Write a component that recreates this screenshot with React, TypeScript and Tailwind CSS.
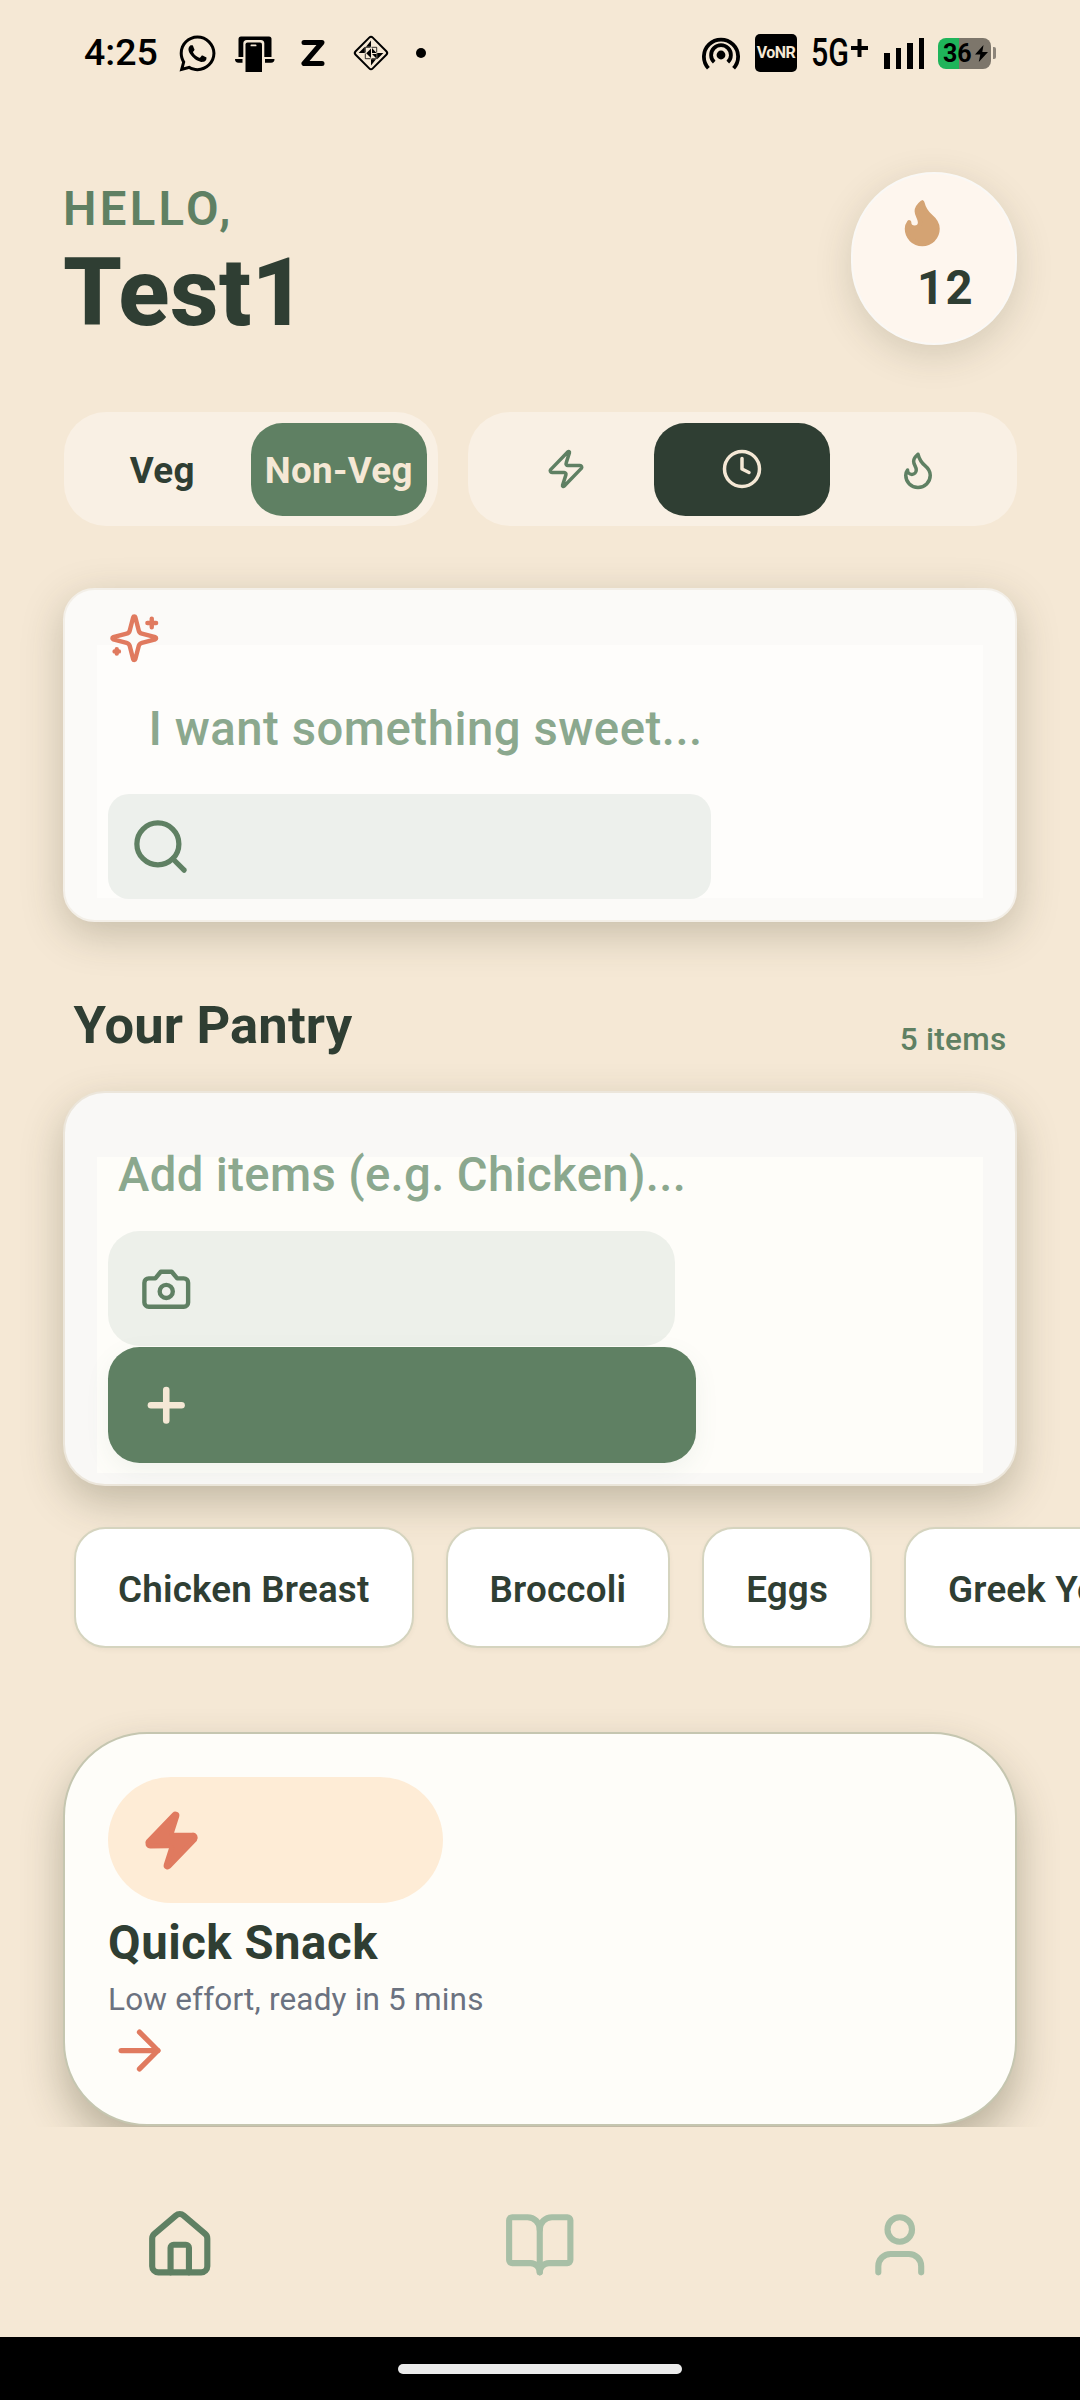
import type { ReactNode } from "react";
import { FaWhatsapp } from "react-icons/fa";
import { ArrowRight, BookOpen, Clock, Flame, House, Plus, Search, User, Zap } from "lucide-react";

const pantry = ["Chicken Breast", "Broccoli", "Eggs", "Greek Yogurt"];

function CastIcon() {
  return (
    <svg width="40" height="38" viewBox="0 0 40 38">
      <path d="M3.500 23V5q0-2.500 2.500-2.500h28q2.500 0 2.500 2.500v18z" />
      <path d="M0 25h7.500v3.800H3.500Q0 28.800 0 25zM30 25h9.500q0 3.800-3.500 3.800h-6z" />
      <path d="M8.300 38V9.500q0-3.500 3.500-3.500h14q3.500 0 3.500 3.500V38z" fill="#f5e8d5" />
      <path d="M12.500 8.500h12.500q2 0 2 2V38H10.500V10.500q0-2 2-2z" />
      <rect x="15.500" y="10.500" width="6" height="1.800" rx=".9" fill="#f5e8d5" />
    </svg>
  );
}

function DiamondIcon() {
  return (
    <svg width="38" height="38" viewBox="0 0 38 38">
      <rect x="6.900" y="6.900" width="24.200" height="24.200" rx="2.500" transform="rotate(45 19 19)" fill="none" stroke="#000" strokeWidth="2" />
      <path d="M19 6.500v6.300h-5zM12.800 12.800V19H6.600zM31.400 19h-6.200v6.200zM19 31.400v-6.200h5z" />
      <path d="M19 14.500V19h-4.500zM20 14l4.500 5H20zM19 19v5L14 19zM24.200 20v4.200L20 20z" />
      <path d="M13.300 18.500v-5.200h5.200M19.500 13.300h5.200v5.200M13.300 19.500v5.200h5.200M19.500 24.700h5.200v-5.200" fill="none" stroke="#000" strokeWidth=".8" />
    </svg>
  );
}

function HotspotIcon() {
  return (
    <svg width="38" height="36" viewBox="0 0 38 36" fill="none" stroke="#000" strokeWidth="3.800">
      <circle cx="19" cy="20" r="4.400" fill="#000" stroke="none" />
      <path d="M12.200 27.200a9.900 9.900 0 1 1 13.600 0" />
      <path d="M6.400 33.200a17.100 17.100 0 1 1 25.200 0" />
    </svg>
  );
}

function SparklesIcon() {
  return (
    <svg width="52.500" height="52.500" viewBox="0 0 24 24" fill="none" stroke="#e07a5f" strokeWidth="2" strokeLinecap="round" strokeLinejoin="round">
      <path d="M9.937 15.500A2 2 0 0 0 8.500 14.063l-6.135-1.582a.5.5 0 0 1 0-.962L8.500 9.936A2 2 0 0 0 9.937 8.500l1.582-6.135a.5.5 0 0 1 .963 0L14.063 8.500A2 2 0 0 0 15.500 9.937l6.135 1.581a.5.5 0 0 1 0 .964L15.500 14.063a2 2 0 0 0-1.437 1.437l-1.582 6.135a.5.5 0 0 1-.963 0z" />
      <path d="M20 3v4M22 5h-4M4 17v2M5 18H3" />
    </svg>
  );
}

function CameraIcon() {
  return (
    <svg width="52.500" height="52.500" viewBox="0 0 24 24" fill="none" stroke="#5f8063" strokeWidth="2" strokeLinecap="round" strokeLinejoin="round">
      <path d="M14.500 4h-5L7 7H4a2 2 0 0 0-2 2v9a2 2 0 0 0 2 2h16a2 2 0 0 0 2-2V9a2 2 0 0 0-2-2h-3l-2.500-3z" />
      <circle cx="12" cy="13" r="3" />
    </svg>
  );
}

function StatusBar() {
  return (
    <div className="flex h-[106px] items-center justify-between pl-[84px] pr-[84px] text-black">
      <div className="flex items-center">
        <span className="w-[95px] text-[37.500px] font-medium leading-none">4:25</span>
        <FaWhatsapp size={41} className="-ml-[2px]" />
        <div className="ml-[17px]"><CastIcon /></div>
        <svg className="ml-[26px]" width="24" height="28" viewBox="0 0 24 28" fill="none" stroke="#000" strokeWidth="5" strokeLinecap="round" strokeLinejoin="round">
          <path d="M3 3.500h18L3 24.500H21" />
        </svg>
        <div className="ml-[27px]"><DiamondIcon /></div>
        <div className="ml-[26px] size-[10px] rounded-full bg-black" />
      </div>
      <div className="flex items-center">
        <HotspotIcon />
        <div className="ml-[15px] flex h-[38px] w-[42px] items-center justify-center rounded-[5px] bg-black text-[16px] font-bold tracking-[-0.500px] text-[#f5e8d5]">VoNR</div>
        <div className="ml-[14px] flex w-[58px] items-center">
          <span className="w-[40px] origin-left scale-x-[0.8] text-[38px] font-medium leading-none">5G</span>
          <svg className="-mt-[10px]" width="17" height="18" viewBox="0 0 17 18">
            <path d="M8.500 0v18M0 9h17" stroke="#000" strokeWidth="4" />
          </svg>
        </div>
        <div className="ml-[15px] flex h-[31px] items-end gap-[6px]">
          <div className="h-[16px] w-[5.500px] bg-black" />
          <div className="h-[21px] w-[5.500px] bg-black" />
          <div className="h-[26px] w-[5.500px] bg-black" />
          <div className="h-[31px] w-[5.500px] bg-black" />
        </div>
        <div className="ml-[14px] flex h-[31px] w-[53px] items-center overflow-hidden rounded-[8px] bg-[linear-gradient(90deg,#1fb45a_21.500px,#7d766b_21.500px)] pl-[5px]">
          <span className="text-[25px] font-bold leading-none">36</span>
          <svg className="ml-[3px]" width="13" height="17" viewBox="0 0 13 17">
            <path d="M8.500 0 0 9.500h5.300L3.800 17 13 7H7.300z" />
          </svg>
        </div>
        <div className="ml-[2px] h-[12px] w-[3px] rounded-r-[2px] bg-[#8d857a]" />
      </div>
    </div>
  );
}

function Card({ className, children }: { className: string; children: ReactNode }) {
  return (
    <section className={"relative border-2 " + className}>
      {children}
    </section>
  );
}

export default function App() {
  return (
    <div className="h-[2400px] w-[1080px] overflow-hidden bg-[#f5e8d5] font-['Roboto',sans-serif] text-[#2f3e33]">
      <div className="h-[2127px] overflow-hidden">
        <StatusBar />

        <header className="mt-[66px] flex h-[173px] justify-between px-[63px]">
          <div className="pt-[7px]">
            <div className="text-[47.250px] font-semibold leading-[60px] tracking-[3.300px] text-[#5f8063]">HELLO,</div>
            <h1 className="mt-px text-[94.500px] font-extrabold leading-[106px] tracking-[0.400px]">Test1</h1>
          </div>
          <div className="h-[173px] w-[166px] rounded-[83px] border-2 border-[#faf8f5] bg-[#fef6ee] pl-[43px] pt-[22px] shadow-[0_10px_36px_rgba(60,60,35,0.17)]">
            <Flame size={52.5} color="#d4a373" fill="#d4a373" />
            <div className="mt-[9px] pl-[21px] text-[47.250px] font-bold leading-[60px] tracking-[1.300px]">12</div>
          </div>
        </header>

        <div className="mt-[67px] flex gap-[30.500px] px-[63.500px]">
          <div className="flex h-[114px] w-[374px] rounded-[42px] bg-[#f9f0e4] p-[10.500px] text-[36.750px] font-bold tracking-[0.300px]">
            <div className="flex flex-1 items-center justify-center pt-[4px]">Veg</div>
            <div className="flex flex-1 items-center justify-center rounded-[31.500px] bg-[#5f8063] pt-[4px] text-[#f5e8d5]">Non-Veg</div>
          </div>
          <div className="flex h-[114px] flex-1 rounded-[42px] bg-[#f9f0e4] p-[10.500px]">
            <div className="flex flex-1 items-center justify-center"><Zap size={42} color="#5f8063" /></div>
            <div className="flex flex-1 items-center justify-center rounded-[31.500px] bg-[#2f3e33]"><Clock size={42} color="#f5e8d5" /></div>
            <div className="flex flex-1 items-center justify-center pl-px pt-px"><Flame size={42} color="#5f8063" /></div>
          </div>
        </div>

        <Card className="mx-[63px] mt-[62px] h-[334px] rounded-[31.500px] border-[#f3efe8] bg-[#fbfaf8] shadow-[0_12px_40px_rgba(60,60,35,0.25)]">
          <div className="absolute bottom-[22px] left-[32px] right-[32px] top-[55px] bg-[#fefdfb]" />
          <div className="relative pl-[43px] pt-[22px]">
            <SparklesIcon />
            <div className="mt-[24.500px] h-[80px] pl-[40.500px] text-[47.250px] font-medium leading-[80px] tracking-[0.530px] text-[#8ba88e]">I want something sweet...</div>
            <div className="mt-[24.500px] flex h-[105px] w-[603px] items-center rounded-[21px] bg-[#edf0ec] pl-[21px]">
              <Search size={63} color="#5f8063" />
            </div>
          </div>
        </Card>

        <div className="mt-[68px] flex h-[101px] items-start justify-between px-[73.500px]">
          <h2 className="text-[52.500px] font-bold leading-[70px] tracking-[0.150px]">Your Pantry</h2>
          <span className="pt-[28px] text-[31.500px] font-medium leading-[44px] tracking-[0.300px] text-[#5f8063]">5 items</span>
        </div>

        <Card className="mx-[63px] h-[395px] rounded-[42px] border-[#ece6db] bg-[#f9f8f6] shadow-[0_16px_42px_rgba(60,60,35,0.28)]">
          <div className="absolute bottom-[11px] left-[32px] right-[32px] top-[64px] bg-[#fefdf9]" />
          <div className="relative pl-[43px] pt-[41.500px]">
            <div className="h-[80px] pl-[10px] text-[47.250px] font-medium leading-[80px] tracking-[0.360px] text-[#8ba88e]">Add items (e.g. Chicken)...</div>
            <div className="mt-[16.500px] flex h-[115px] w-[567px] items-center rounded-[31.500px] bg-[#edf0ea] pl-[32px] pt-px">
              <CameraIcon />
            </div>
            <div className="mt-px flex h-[116px] w-[588px] items-center rounded-[31.500px] bg-[#5f8063] pl-[32px] shadow-[0_8px_24px_rgba(95,128,99,0.08)]">
              <Plus size={52.5} color="#f5e8d5" strokeWidth={3} />
            </div>
          </div>
        </Card>

        <div className="relative mt-[41px] flex gap-[32px] pl-[74px]">
          {pantry.map((item) => (
            <div key={item} className="flex h-[121px] shrink-0 items-center whitespace-nowrap rounded-[31.500px] border-2 border-[#d5d4bf] bg-white px-[42px] pt-[4px] text-[36.750px] font-semibold tracking-[0.200px] shadow-[0_2px_5px_rgba(60,60,35,0.05)]">
              {item}
            </div>
          ))}
        </div>

        <Card className="mx-[63px] mt-[84px] h-[394px] rounded-[84px] border-[#c5c6b0] bg-[#fefdf9] pl-[43px] pt-[43px] shadow-[0_20px_42px_rgba(60,60,35,0.32)]">
          <div className="flex h-[126px] w-[335px] items-center rounded-[63px] bg-[#feecd6] pl-[31.500px]">
            <Zap size={63} color="#e07a5f" fill="#e07a5f" />
          </div>
          <div className="mt-[10px] text-[47.250px] font-bold leading-[60px] tracking-[0.550px]">Quick Snack</div>
          <div className="mt-[6px] text-[31.500px] leading-[42px] tracking-[0.180px] text-[#6b7280]">Low effort, ready in 5 mins</div>
          <ArrowRight size={63} color="#e07a5f" className="-mt-[2px]" />
        </Card>
      </div>

      <nav className="flex h-[210px] items-center pt-[25px]">
        <div className="flex flex-1 justify-center"><House size={73.5} color="#5f8063" /></div>
        <div className="flex flex-1 justify-center"><BookOpen size={73.5} color="#a8bfa6" /></div>
        <div className="flex flex-1 justify-center"><User size={73.5} color="#a8bfa6" /></div>
      </nav>
      <div className="flex h-[63px] items-center justify-center bg-black">
        <div className="h-[10px] w-[284px] rounded-full bg-[#ebebeb]" />
      </div>
    </div>
  );
}
